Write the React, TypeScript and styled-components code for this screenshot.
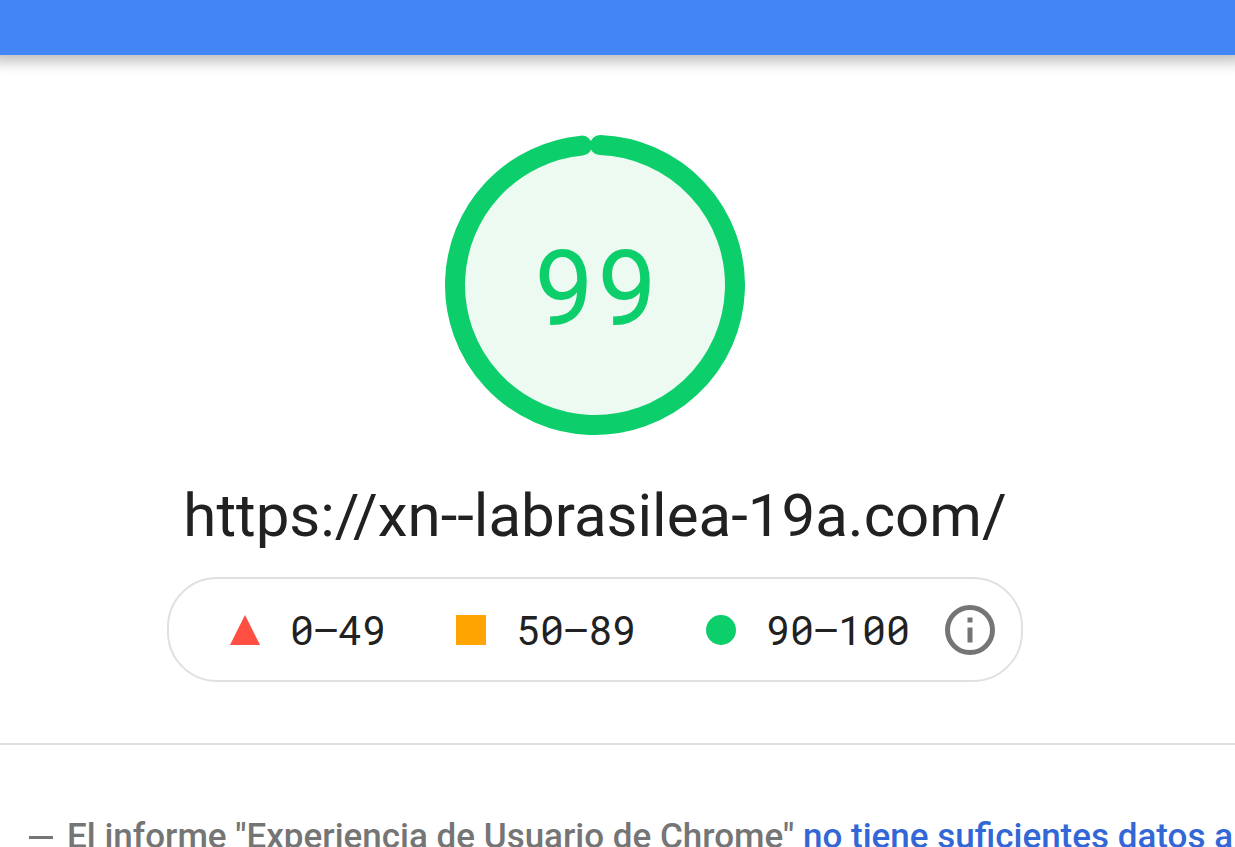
import React from 'react';
import styled, { createGlobalStyle } from 'styled-components';

const GlobalStyle = createGlobalStyle`
  * { box-sizing: border-box; }
  body { margin: 0; background: #fff; color: #212121; font-family: Roboto, "Liberation Sans", sans-serif; }
`;

const Page = styled.div`
  height: 100vh;
  overflow: hidden;
  display: flex;
  flex-direction: column;
`;

const TopBar = styled.header`
  flex: none;
  height: 55px;
  background: #4285f4;
  box-shadow: 0 -4px 14px 10px rgba(0, 0, 0, 0.28);
`;

const Summary = styled.section`
  flex: none;
  display: flex;
  flex-direction: column;
  align-items: center;
  padding: 80px 45px 61px 0;
  border-bottom: 2px solid #e0e0e0;
`;

const Gauge = styled.div`
  display: grid;
  place-items: center;
  width: 300px;
  height: 300px;
  > * { grid-area: 1 / 1; }
`;

const Score = styled.div`
  padding-bottom: 2px;
  color: #0cce6b;
  font-family: "Roboto Mono", Roboto, sans-serif;
  font-size: 105px;
  line-height: 120px;
`;

const PageUrl = styled.h1`
  margin: 41px 0 21px;
  font-size: 60px;
  font-weight: 400;
  line-height: 80px;
`;

const Scale = styled.div`
  display: flex;
  align-items: center;
  height: 105px;
  padding: 0 26px 0 61px;
  border: 2px solid #e0e0e0;
  border-radius: 50px;
`;

const Ranges = styled.ul`
  display: flex;
  gap: 70px;
  margin: 0 35px 0 0;
  padding: 0;
  list-style: none;
`;

const Range = styled.li`
  display: flex;
  align-items: center;
  gap: 30px;
  font-family: "Roboto Mono", Inter, sans-serif;
  font-size: 40px;
  line-height: 50px;
`;

const InfoButton = styled.button`
  display: block;
  width: 50px;
  height: 50px;
  padding: 0;
  border: 0;
  background: none;
  color: #757575;
`;

const Notice = styled.p`
  flex: none;
  display: flex;
  gap: 14px;
  margin: 0;
  padding: 72px 0 30px 29px;
  color: #757575;
  font-size: 35px;
  font-weight: 500;
  line-height: 40px;
  white-space: nowrap;
`;

const Dash = styled.span`
  flex: none;
  align-self: center;
  width: 24px;
  height: 3px;
  background: #757575;
`;

const NoticeLink = styled.a`
  color: #3367d6;
  text-decoration: none;
`;

export default function App() {
  return (
    <Page>
      <GlobalStyle />
      <TopBar />
      <Summary>
        <Gauge>
          <svg width="300" height="300" viewBox="0 0 300 300" aria-hidden="true">
            <circle cx="150" cy="150" r="149" fill="#ecfaf1" />
            <circle
              cx="150"
              cy="150"
              r="140"
              fill="none"
              stroke="#0cce6b"
              strokeWidth="20"
              strokeLinecap="round"
              pathLength="360"
              strokeDasharray="352.6 7.4"
              transform="rotate(-87.95 150 150)"
            />
          </svg>
          <Score>99</Score>
        </Gauge>
        <PageUrl>https://xn--labrasilea-19a.com/</PageUrl>
        <Scale>
          <Ranges>
            <Range>
              <svg width="30" height="30" viewBox="0 0 30 30" aria-hidden="true"><path d="M15 0L30 30H0Z" fill="#ff4e42" /></svg>
              0–49
            </Range>
            <Range>
              <svg width="30" height="30" viewBox="0 0 30 30" aria-hidden="true"><path d="M0 0H30V30H0Z" fill="#ffa400" /></svg>
              50–89
            </Range>
            <Range>
              <svg width="30" height="30" viewBox="0 0 30 30" aria-hidden="true"><circle cx="15" cy="15" r="15" fill="#0cce6b" /></svg>
              90–100
            </Range>
          </Ranges>
          <InfoButton type="button" aria-label="Información">
            <svg width="50" height="50" viewBox="0 0 50 50" aria-hidden="true">
              <circle cx="25" cy="25" r="22.5" fill="none" stroke="currentColor" strokeWidth="5" />
              <path d="M22.5 12.5h5v5h-5zM22.5 22.5h5v15h-5z" fill="currentColor" />
            </svg>
          </InfoButton>
        </Scale>
      </Summary>
      <Notice>
        <Dash />
        <span>
          El informe "Experiencia de Usuario de Chrome" <NoticeLink href="#datos">no tiene suficientes datos a</NoticeLink>
        </span>
      </Notice>
    </Page>
  );
}
